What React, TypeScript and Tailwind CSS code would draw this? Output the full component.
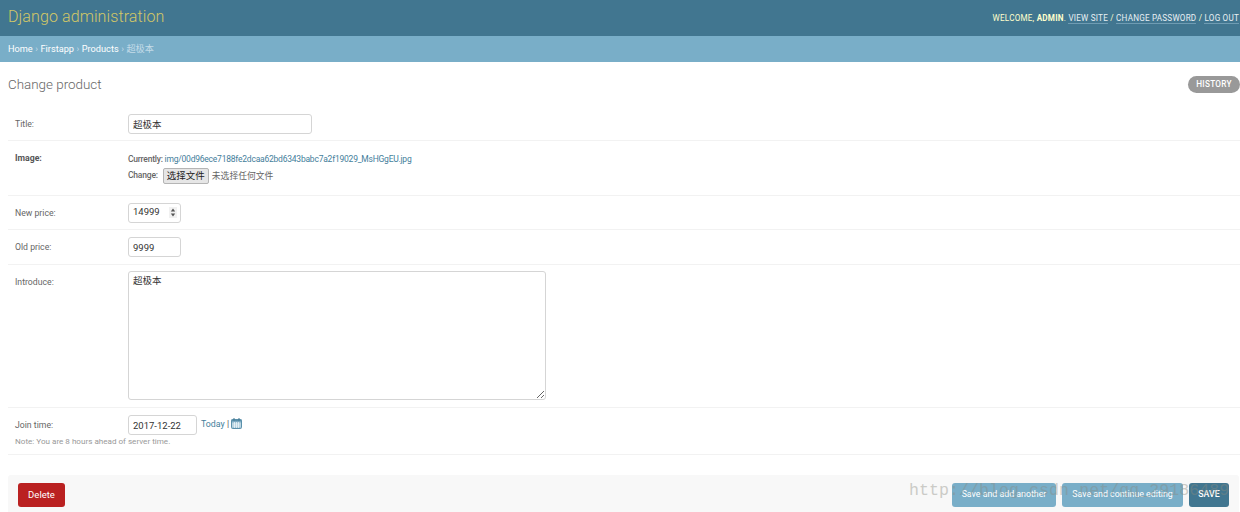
const cjk = "font-['Roboto','Noto_Sans_CJK_SC',sans-serif]";

function FormRow({ label, bold, className, children }: { label: string; bold?: boolean; className: string; children: React.ReactNode }) {
  return (
    <div className={`flex border-b border-[#f2f2f2] pl-[7px] ${className}`}>
      <label className={`w-[113px] shrink-0 text-[8.7px] leading-[12px] ${bold ? "font-bold text-[#555]" : "text-[#666]"}`}>{label}</label>
      <div className="min-w-0 flex-1">{children}</div>
    </div>
  );
}

function CalendarIcon() {
  return (
    <svg width="11" height="11" viewBox="0 0 11 11" className="inline-block align-[-2px]">
      <rect x="0.5" y="1.5" width="10" height="9" rx="1" fill="#9fc3d6" stroke="#5a90ab" />
      <rect x="0.5" y="1.5" width="10" height="2" fill="#5a90ab" />
      <rect x="2.5" y="0" width="1" height="2.5" fill="#417690" />
      <rect x="7.5" y="0" width="1" height="2.5" fill="#417690" />
      <path d="M3.5 4v6M5.5 4v6M7.5 4v6M1 6h9M1 8h9" stroke="#fff" strokeWidth="0.6" />
    </svg>
  );
}

export default function App() {
  return (
    <div className={`relative h-[512px] w-[1240px] overflow-hidden bg-white ${cjk}`}>
      <header className="flex h-[36px] items-center justify-between bg-[#417690] pl-[8px] pr-[1px]">
        <h1 className="-mt-[2px] text-[16px] font-light leading-none tracking-[0.1px] text-[#f5dd5d] opacity-80">Django administration</h1>
        <div className="text-[8.15px] uppercase tracking-[0.22px] text-[#ffc]">
          Welcome, <strong className="font-bold">admin</strong>.{" "}
          <span className="border-b border-[#6f9cb3] text-[#e8f0f4]">View site</span> /{" "}
          <span className="border-b border-[#6f9cb3] text-[#e8f0f4]">Change password</span> /{" "}
          <span className="border-b border-[#6f9cb3] text-[#e8f0f4]">Log out</span>
        </div>
      </header>

      <nav className="flex h-[26px] items-center bg-[#79aec8] pl-[8px] text-[9.2px] text-white">
        <span>Home</span>
        <span className="mx-[2.5px] text-[#c4dce8]">›</span>
        <span>Firstapp</span>
        <span className="mx-[2.5px] text-[#c4dce8]">›</span>
        <span>Products</span>
        <span className="mx-[2.5px] text-[#c4dce8]">›</span>
        <span className="text-[#c4dce8]">超极本</span>
      </nav>

      <main className="flex flex-col pl-[8px]">
        <div className="flex h-[46px] items-start justify-between">
          <h2 className="mt-[14px] text-[13.4px] font-light leading-[18px] text-[#666]">Change product</h2>
          <span className="mt-[14px] flex h-[17px] w-[52px] items-center justify-center rounded-full bg-[#999] text-[8.2px] font-medium tracking-[0.3px] text-white">HISTORY</span>
        </div>

        <FormRow label="Title:" className="h-[33px] items-center">
          <input readOnly value="超极本" className={`block h-[20px] w-[184px] rounded-[3px] border border-[#d5d5d5] bg-white px-[4px] text-[9.5px] text-[#333] outline-none ${cjk}`} />
        </FormRow>

        <FormRow label="Image:" bold className="h-[55px] pt-[11px]">
          <div className="text-[8.5px] leading-[12px]">
            <div className="mt-[1px] tracking-[-0.22px]">
              <span className="font-medium text-[#666]">Currently:</span>{" "}
              <span className="text-[#447e9b]">img/00d96ece7188fe2dcaa62bd6343babc7a2f19029_MsHGgEU.jpg</span>
            </div>
            <div className="mt-[3px] flex items-center">
              <span className="-mt-[3px] font-medium tracking-[-0.2px] text-[#666]">Change:</span>
              <span className="ml-[5px] flex h-[16px] w-[46px] items-center justify-center rounded-[2px] border border-[#b5b5b5] bg-[#e6e6e6] text-[9.5px] text-[#222]">选择文件</span>
              <span className="ml-[3px] text-[8.8px] text-[#666]">未选择任何文件</span>
            </div>
          </div>
        </FormRow>

        <FormRow label="New price:" className="h-[34px] items-center">
          <div className="flex h-[20px] w-[53px] items-center justify-between rounded-[3px] border border-[#d5d5d5] pl-[4px] pr-[3px] text-[9.5px] text-[#333]">
            <span>14999</span>
            <svg width="8" height="11" viewBox="0 0 8 11" className="bg-[#f1f1f1]">
              <path d="M4 1.5 6.2 4.5H1.8Z M4 9.5 1.8 6.5H6.2Z" fill="#555" />
            </svg>
          </div>
        </FormRow>

        <FormRow label="Old price:" className="h-[35px] items-center">
          <input readOnly value="9999" className={`block h-[20px] w-[53px] rounded-[3px] border border-[#d5d5d5] px-[4px] text-[9.5px] text-[#333] outline-none ${cjk}`} />
        </FormRow>

        <FormRow label="Introduce:" className="h-[143px] pt-[11px]">
          <textarea readOnly value="超极本" className={`-mt-[5px] block h-[129px] w-[418px] rounded-[3px] border border-[#d5d5d5] px-[4px] py-[3px] text-[9.5px] leading-[12px] text-[#333] outline-none ${cjk}`} />
        </FormRow>

        <div className="flex h-[47px] flex-col border-b border-[#f2f2f2] pl-[7px] pt-[7px]">
          <div className="flex items-center">
            <label className="w-[113px] shrink-0 text-[8.7px] leading-[20px] text-[#666]">Join time:</label>
            <input readOnly value="2017-12-22" className={`block h-[20px] w-[69px] rounded-[3px] border border-[#d5d5d5] px-[4px] text-[9.5px] text-[#333] outline-none ${cjk}`} />
            <span className="ml-[4px] -mt-[1px] whitespace-pre text-[8.8px] text-[#447e9b]">Today <span className="text-[#555]">| </span><CalendarIcon /></span>
          </div>
          <p className="text-[8.1px] leading-[12px] text-[#999]">Note: You are 8 hours ahead of server time.</p>
        </div>

        <div className="mt-[20px] flex h-[38px] w-[1231px] items-start justify-between rounded-t-[3px] bg-[#f8f8f8] pl-[10px] pr-[10px] pt-[8px]">
          <span className="flex h-[24px] w-[47px] items-center justify-center rounded-[3px] bg-[#ba2121] text-[9.5px] text-white">Delete</span>
          <div className="flex gap-[6px] text-[8.8px] text-white">
            <span className="flex h-[24px] w-[104px] items-center justify-center rounded-[3px] bg-[#79aec8]">Save and add another</span>
            <span className="flex h-[24px] w-[121px] items-center justify-center rounded-[3px] bg-[#79aec8]">Save and continue editing</span>
            <span className="flex h-[24px] w-[40px] items-center justify-center rounded-[3px] bg-[#417690] font-medium">SAVE</span>
          </div>
        </div>
      </main>

      <div className="pointer-events-none absolute left-[909px] top-[481px] font-['Liberation_Mono',monospace] text-[16.6px] leading-[20px] tracking-[0.05px] text-[#8a8a80] opacity-40">http://blog.csdn.net/qq_29186489</div>
    </div>
  );
}
